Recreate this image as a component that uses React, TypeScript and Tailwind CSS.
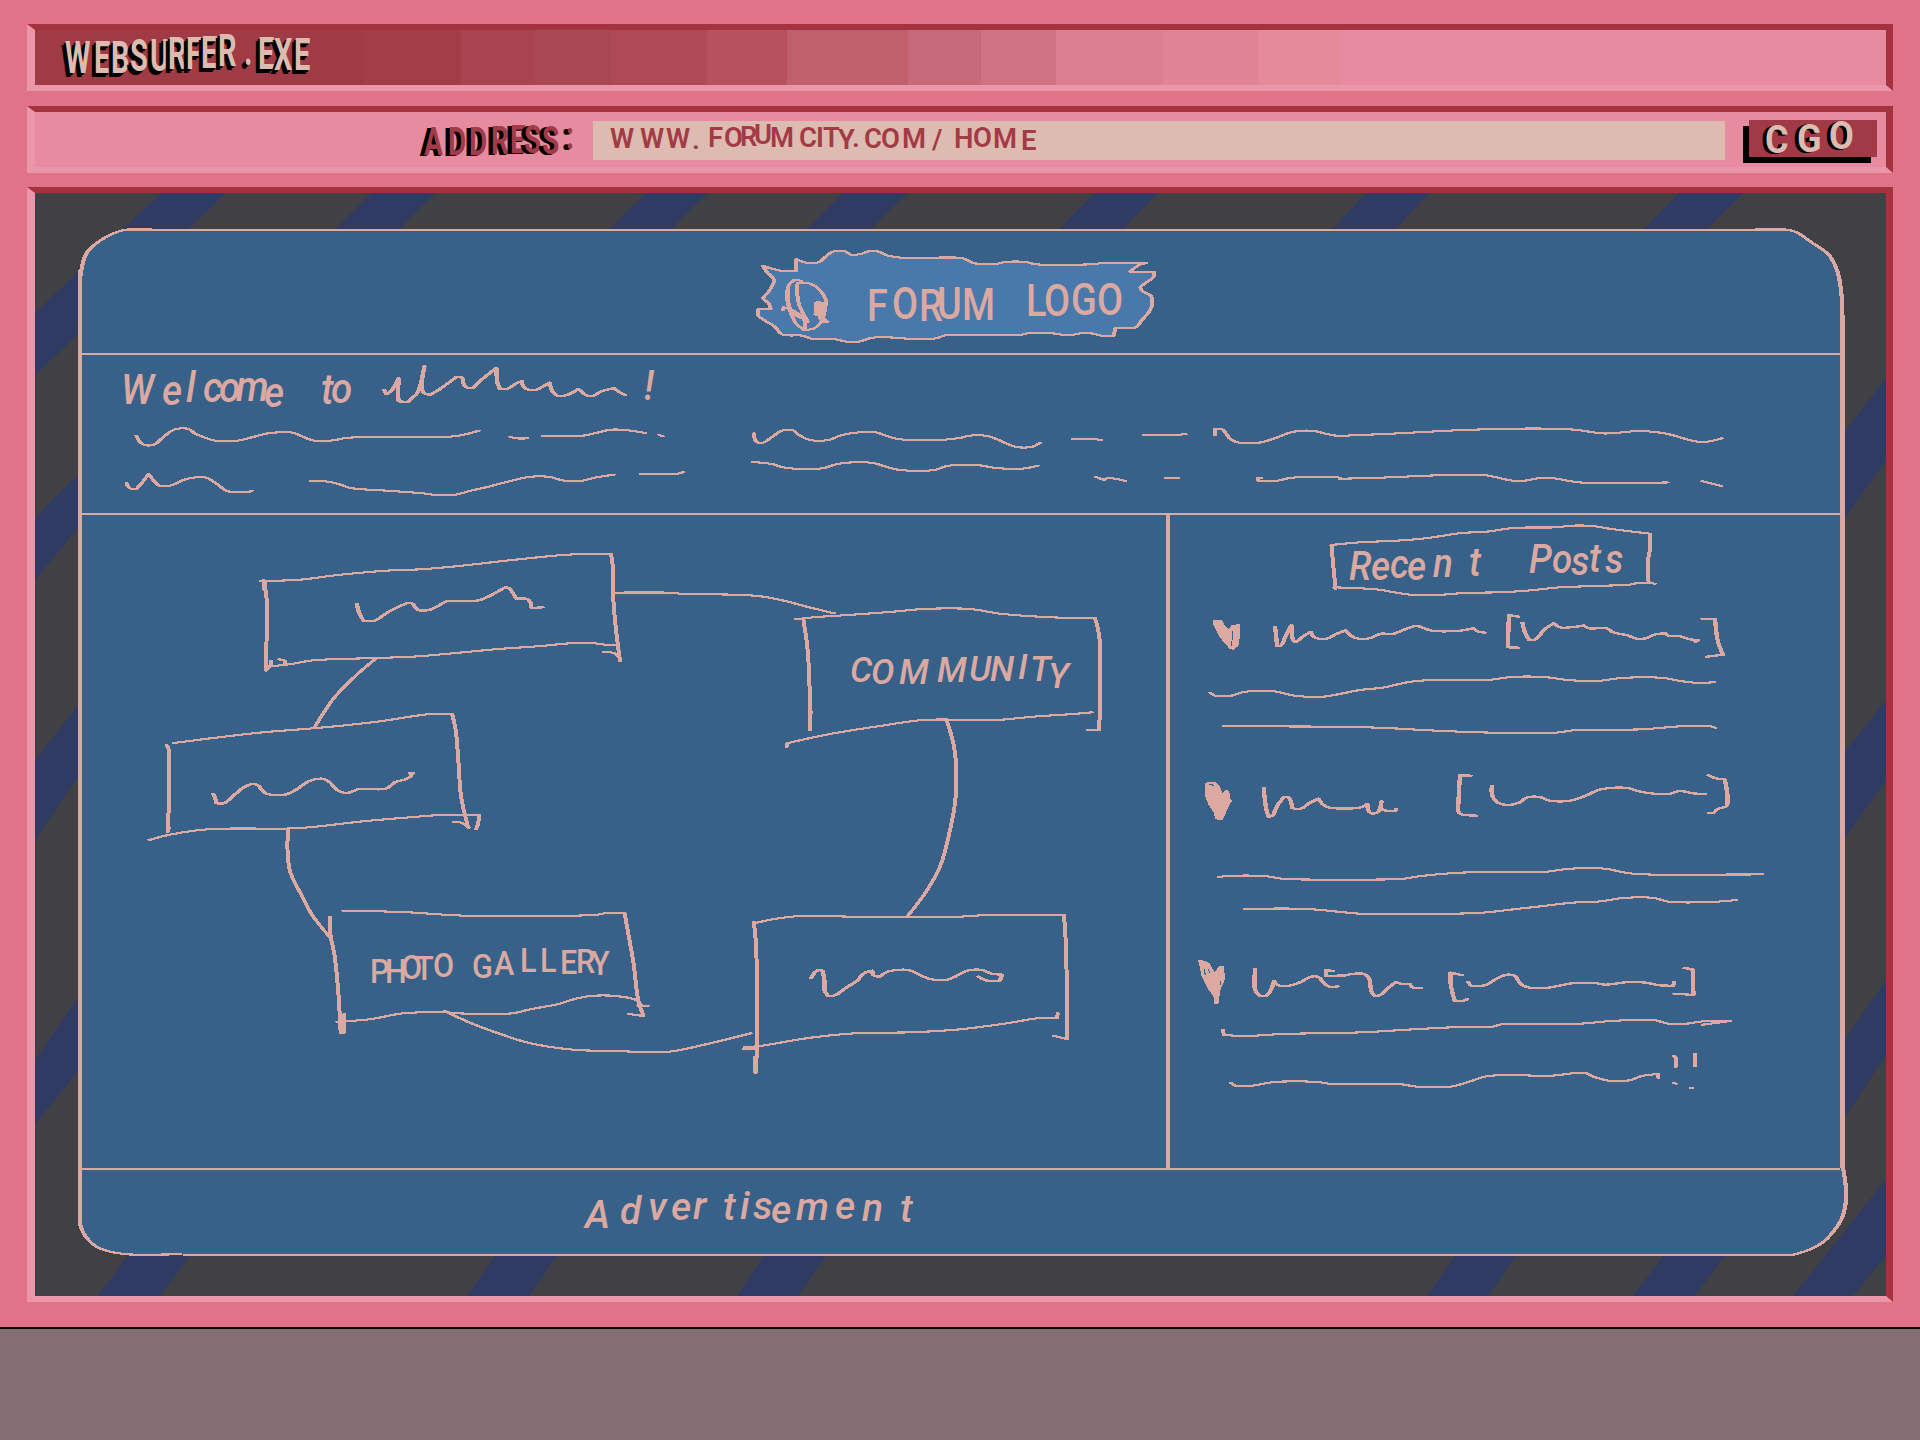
import type { ReactNode } from "react";

const INK = "#dba9a1";

/* ---------- pen helpers ---------- */

type Grid = [ox: number, oy: number, kx: number, ky: number];

const parse = (s: string, [ox, oy, kx, ky]: Grid) => {
  const n = s.trim().split(/\s+/).map(Number);
  const pts: [number, number][] = [];
  for (let i = 0; i < n.length; i += 2) pts.push([ox + n[i] / kx, oy + n[i + 1] / ky]);
  return pts;
};

/* Smooth curve through the points; sharp turns stay sharp. */
const smooth = (pts: [number, number][], sx: number) => {
  const p = pts.map(([x, y]) => [x / sx, y] as [number, number]);
  const dir = p.map((c, i) => {
    const a = p[i - 1];
    const b = p[i + 1];
    if (!a || !b) return [0, 0, 0];
    const u = [c[0] - a[0], c[1] - a[1]];
    const v = [b[0] - c[0], b[1] - c[1]];
    const lu = Math.hypot(u[0], u[1]) || 1;
    const lv = Math.hypot(v[0], v[1]) || 1;
    if ((u[0] * v[0] + u[1] * v[1]) / (lu * lv) < 0.4) return [0, 0, 0];
    const t = [u[0] / lu + v[0] / lv, u[1] / lu + v[1] / lv];
    const lt = Math.hypot(t[0], t[1]) || 1;
    return [t[0] / lt, t[1] / lt, Math.min(lu, lv) * 0.6];
  });
  let d = `M${p[0][0].toFixed(2)} ${p[0][1].toFixed(2)}`;
  for (let i = 1; i < p.length; i++) {
    const len = Math.hypot(p[i][0] - p[i - 1][0], p[i][1] - p[i - 1][1]) / 3;
    const h0 = Math.min(len, dir[i - 1][2]);
    const h1 = Math.min(len, dir[i][2]);
    const c = [
      p[i - 1][0] + dir[i - 1][0] * h0,
      p[i - 1][1] + dir[i - 1][1] * h0,
      p[i][0] - dir[i][0] * h1,
      p[i][1] - dir[i][1] * h1,
      p[i][0],
      p[i][1],
    ];
    d += `C${c.map((v) => v.toFixed(2)).join(" ")}`;
  }
  return d;
};

/* Flat nib: upright strokes come out about twice as thick as level ones. */
function Pen({ grid, lines, nib = 2.1 }: { grid: Grid; lines: string[]; nib?: number }) {
  return (
    <g transform="scale(1.9 1)" fill="none" stroke={INK} strokeWidth={nib} strokeLinejoin="round" strokeLinecap="round">
      {lines.map((l, i) => (
        <path key={i} d={smooth(parse(l, grid), 1.9)} />
      ))}
    </g>
  );
}

function Fill({ grid, shape, color = INK }: { grid: Grid; shape: string; color?: string }) {
  return <polygon fill={color} points={parse(shape, grid).map((p) => p.join(",")).join(" ")} />;
}

function Canvas({ box, className = "", children }: { box: [number, number, number, number]; className?: string; children: ReactNode }) {
  return (
    <svg
      width={box[2]}
      height={box[3]}
      viewBox={box.join(" ")}
      shapeRendering="crispEdges"
      className={`block shrink-0 overflow-visible ${className}`}
    >
      {children}
    </svg>
  );
}

type LetteringProps = {
  text: string;
  x: number[];
  y: number[];
  size: number;
  squeeze?: number;
  color?: string;
  shadow?: [number, number];
  className?: string;
};

/* Uneven hand lettering: every glyph has its own place. */
function Lettering({ text, x, y, size, squeeze = 1, color = INK, shadow, className = "" }: LetteringProps) {
  return (
    <text
      transform={`scale(${squeeze} 1)`}
      x={x.map((v) => (v / squeeze).toFixed(1)).join(" ")}
      y={y.join(" ")}
      fontSize={size}
      fill={color}
      style={shadow ? { textShadow: `${shadow[0]}px ${shadow[1]}px 0 #000, ${shadow[0] / 2}px ${shadow[1] / 2}px 0 #000` } : undefined}
      className={`font-[Roboto,sans-serif] ${className}`}
    >
      {text}
    </text>
  );
}

/* ---------- window chrome ---------- */

function Bevel({ className = "", children }: { className?: string; children: ReactNode }) {
  return (
    <div
      className={`flex shrink-0 border-t-[6px] border-r-[7px] border-b-[6px] border-l-[8px] border-t-[#a5333f] border-r-[#a5333f] border-b-[#ec96aa] border-l-[#ec96aa] ${className}`}
    >
      {children}
    </div>
  );
}

function TitleBar() {
  return (
    <Bevel className="h-[67px] bg-[linear-gradient(90deg,#a03a45_0_329px,#a33e49_329px_426px,#a74450_426px_500px,#a94852_500px_576px,#ae4a56_576px_672px,#b7515d_672px_752px,#c0606d_752px_873px,#c66a79_873px_946px,#cf7283_946px_1021px,#db7e91_1021px_1127px,#e08396_1127px_1223px,#e38a9b_1223px_1306px,#e78ba1_1306px)]">
      <h1>
        <Canvas box={[35, 30, 300, 55]}>
          <Lettering
            text="WEBSURFER.EXE"
            x={[65, 94, 111, 130, 150, 168, 186, 201, 218, 244, 258, 274, 294]}
            y={[73, 73, 73, 71, 71, 69, 69, 68, 66, 65, 69, 70, 70]}
            size={44}
            squeeze={0.66}
            color="#debbb0"
            shadow={[-5, 3]}
            className="font-bold"
          />
        </Canvas>
      </h1>
    </Bevel>
  );
}

function AddressBar() {
  return (
    <Bevel className="mt-[15px] h-[67px] bg-[#e78ba1]">
      <label className="flex">
        <Canvas box={[35, 112, 558, 55]}>
          <Lettering
            text="ADDRESS:"
            x={[424, 448, 469, 491, 510, 524, 542, 566]}
            y={[155, 155, 155, 154, 153, 153, 154, 149]}
            size={38}
            squeeze={0.74}
            color="#a33b47"
            shadow={[-5, 1]}
            className="font-bold"
          />
        </Canvas>
        <div className="mt-[9px] h-[39px] w-[1132px] bg-[#debbb0]">
          <Canvas box={[593, 121, 1132, 39]}>
            <Lettering
              text="WWW.FORUMCITY.COM/HOME"
              x={[610, 640, 666, 692, 708, 724, 740, 754, 770, 799, 816, 823, 838, 852, 864, 881, 902, 932, 954, 973, 993, 1021]}
              y={[148, 148, 148, 149, 147, 147, 146, 144, 147, 147, 147, 147, 149, 147, 148, 148, 148, 149, 148, 147, 148, 150]}
              size={28}
              squeeze={0.98}
              color="#a33b47"
              className="font-semibold"
            />
          </Canvas>
        </div>
      </label>
      <button className="mt-2 ml-6 h-[37px] w-[128px] bg-[#a03a46] shadow-[-6px_6px_0_#000]">
        <Canvas box={[1749, 120, 128, 37]}>
          <Lettering
            text="CGO"
            x={[1765, 1797, 1829]}
            y={[153, 152, 149]}
            size={38}
            squeeze={0.95}
            color="#debbb0"
            shadow={[-4, 1]}
            className="font-bold"
          />
        </Canvas>
      </button>
    </Bevel>
  );
}

/* ---------- forum page ---------- */

const STRIPES = [
  "161,193 226,193 35,375 35,313",
  "372,193 436,193 340,288 276,288",
  "646,193 708,193 612,288 550,288",
  "843,193 908,193 810,288 746,288",
  "1094,193 1158,193 1066,288 1002,288",
  "1366,193 1429,193 1342,288 1278,288",
  "1679,193 1743,193 1648,288 1584,288",
  "35,517 90,462 90,514 35,580",
  "35,760 90,690 90,760 35,840",
  "35,1060 90,980 90,1057 35,1124",
  "127,1256 190,1256 160,1296 98,1296",
  "495,1256 557,1256 529,1296 467,1296",
  "763,1256 826,1256 798,1296 737,1296",
  "1455,1256 1516,1256 1488,1296 1427,1296",
  "1663,1256 1725,1256 1695,1296 1633,1296",
  "1886,1179 1886,1256 1853,1296 1793,1296",
  "1886,378 1886,460 1830,540 1830,450",
  "1886,700 1886,780 1830,860 1830,770",
  "1886,980 1886,1055 1830,1140 1830,1060",
];

function Stripes() {
  return (
    <Canvas box={[35, 193, 1851, 1103]} className="absolute inset-0">
      {STRIPES.map((s) => (
        <polygon key={s} points={s} fill="#2f3b62" />
      ))}
    </Canvas>
  );
}

const OUTLINE =
  "M80 300L81 272L88 251L101 240L112 234L124 229.5H150L153 230H1740L1756 229.5H1785L1796 232L1811 242L1828 254L1837 270L1841 290L1842.5 320V1168L1845.5 1184L1846 1200L1842 1218L1833 1232L1822 1243L1806 1251L1792 1255H183L180 1254H124L99 1248L86 1237L80 1224Z";

function PanelEdge() {
  return (
    <Canvas box={[78, 229, 1767, 1027]} className="absolute inset-0">
      <path d={OUTLINE} fill="#386189" />
      <path d="M124 230H1785M183 1255H1795" stroke={INK} strokeWidth={2} />
      <path d="M80 270V1224M1842.5 315V1168" stroke={INK} strokeWidth={4.5} />
      <Pen
        nib={2.2}
        grid={[0, 0, 1, 1]}
        lines={[
          "80 300 81 272 88 251 101 240 112 234 124 230 150 229",
          "1756 229.5 1785 229.5 1796 232 1811 242 1828 254 1837 270 1841 290 1842.5 320",
          "1843 1168 1845.5 1184 1846 1200 1842 1218 1833 1232 1822 1243 1806 1251 1792 1255",
          "180 1254 124 1254 99 1248 86 1237 80 1224",
        ]}
      />
    </Canvas>
  );
}

function Logo() {
  const g: Grid = [640, 80, 2.45, 3];
  const edge =
    "302 558 350 573 383 573 383 538 408 548 438 547 450 535 475 514 502 514 517 524 540 522 565 513 585 515 605 526 650 534 788 534 820 550 875 551 895 546 945 546 970 553 1105 553 1135 549 1241 549 1225 554 1200 575 1260 575 1259 590 1226 622 1230 632 1252 648 1252 685 1230 720 1212 743 1165 743 1160 768 1130 767 1105 760 1080 760 1050 766 1010 760 950 760 930 765 748 766 725 775 655 776 625 773 570 773 535 785 505 785 480 778 420 776 398 767 350 764 330 740 290 707 290 688 320 686 315 670 302 655 315 635 328 600 310 575 302 558";
  return (
    <Canvas box={[756, 250, 400, 94]}>
      <Fill grid={g} shape={edge} color="#4979aa" />
      <Pen
        grid={g}
        lines={[
          edge,
          "395 602 378 600 365 615 361 660 370 700 382 730 402 750 425 746 442 730 453 690 454 655 440 630 420 612 390 608",
          "386 610 387 660 397 695 412 725",
          "350 690 352 682 372 690 400 715 405 748",
          "364 620 364 670 375 700 395 715",
          "440 715 452 727 460 725",
        ]}
      />
      <Fill grid={g} shape="427 668 434 662 456 668 456 695 452 712 464 725 446 730 440 712 425 704" />
      <Lettering
        text="FORUM LOGO"
        x={[867, 892, 919, 937, 962, 1000, 1026, 1044, 1071, 1097]}
        y={[321, 319, 321, 319, 320, 316, 316, 316, 315, 315]}
        size={44}
        squeeze={0.86}
        className="font-medium"
      />
    </Canvas>
  );
}

function Welcome() {
  const a: Grid = [60, 340, 2.45, 3];
  const b: Grid = [700, 400, 2.45, 3];
  const c: Grid = [0, 0, 0.81667, 0.81667];
  return (
    <section className="h-[160px] border-b-2 border-[#dba9a1]">
      <Canvas box={[82, 355, 1758, 158]}>
        <Lettering
          text="Welcome to !"
          x={[121, 162, 186, 203, 219, 236, 264, 290, 321, 331, 400, 644]}
          y={[404, 405, 402, 402, 402, 401, 407, 400, 404, 403, 400, 400]}
          size={43}
          squeeze={0.9}
          className="font-medium italic"
        />
        <Pen
          nib={2.3}
          grid={a}
          lines={[
            "795 150 800 163 812 152 830 115 828 165 830 184 852 186 862 175 875 160 882 140 893 78 886 140 893 160 905 165 925 152 950 130 972 110 984 112 990 135 1000 145 1012 143 1030 122 1069 84 1072 130 1078 147 1095 147 1115 132 1132 123 1142 147 1165 150 1185 138 1200 128 1207 155 1220 168 1240 166 1270 147",
            "1275 150 1288 165 1305 168 1325 155 1358 144 1368 155 1384 165",
          ]}
        />
        <Pen
          grid={a}
          lines={[
            "187 287 195 305 207 315 228 315 250 295 270 275 285 267 315 267 330 280 360 295 380 302 435 302 470 292 510 280 570 278 595 290 622 302 670 301 700 294 750 291 955 290 990 284 1026 272",
            "1102 290 1118 295 1145 295",
            "1182 288 1275 288 1310 280 1350 269 1385 270 1433 279",
            "1468 285 1478 289",
            "163 430 172 445 187 447 200 430 217 402 232 425 245 438 270 437 300 421 325 413 358 413 380 428 415 455 465 455 470 452",
            "614 423 650 424 680 431 712 444 800 452 890 460 920 465 970 464 1000 454 1050 440 1100 424 1155 410 1200 411 1235 422 1280 422 1310 413 1358 404",
            "1422 402 1510 402 1528 396",
          ]}
        />
        <Pen
          grid={b}
          lines={[
            "132 100 136 122 145 130 157 127 180 108 205 90 228 91 240 103 270 120 315 120 345 106 390 97 430 97 460 109 485 117 520 120 590 120 640 113 660 107 705 108 730 119 750 130 775 141 815 140 834 128",
            "130 186 180 193 200 201 245 207 300 205 330 194 360 188 425 189 455 200 490 210 575 210 605 198 640 195 685 196 725 204 790 206 828 197",
            "912 117 960 117 983 120",
            "1087 104 1175 104 1190 102",
            "970 231 990 240 1000 234 1043 243",
            "1142 234 1173 234",
            "1262 105 1262 87 1278 87 1290 103 1300 118 1320 128 1370 128 1410 114 1440 100 1465 93 1505 93 1535 102 1568 109",
            "1376 234 1366 234 1367 242 1415 242 1440 235 1475 231 1550 231 1568 233",
          ]}
        />
        <Pen
          grid={c}
          lines={[
            "1094 356 1140 354 1200 351 1260 350 1287 351 1310 354 1340 352 1360 354 1390 361 1406 358",
            "1094 391 1130 390 1180 388 1212 388 1240 393 1262 390 1290 394 1362 394",
            "1390 393 1406 397",
          ]}
        />
      </Canvas>
    </section>
  );
}

function SiteMap() {
  const top: Grid = [120, 530, 2.8, 3];
  const photo: Grid = [280, 820, 2.8, 3];
  const right: Grid = [680, 580, 3, 3];
  return (
    <nav className="border-r-4 border-[#dba9a1]">
      <Canvas box={[82, 515, 1084, 653]}>
        <Pen
          grid={top}
          lines={[
            "394 153 505 149 610 135 760 121 840 118 940 109 1090 91 1240 75 1300 72 1375 72",
            "1375 72 1381 120 1382 220 1390 310 1400 393",
            "1355 366 1385 370 1395 380",
            "402 150 410 200 410 350 408 422 422 405 422 392",
            "405 155 404 180",
            "430 408 480 402 540 391 715 384 820 380 960 367 1060 357 1180 348 1260 340 1330 340 1370 346 1390 346",
            "446 388 463 392 462 402",
            "150 639 300 619 400 607 540 595 630 586 720 575 870 552 930 552",
            "930 552 940 600 948 700 955 800 975 893",
            "934 876 955 878 978 893",
            "131 645 137 660 137 815 133 905 138 892",
            "82 930 135 915 245 898 460 896 530 892 680 874 800 863 900 855 1005 855 1003 880 997 897",
            "716 386 660 437 600 503 545 592",
            "1390 190 1400 188 1535 188 1568 191",
          ]}
        />
        <Pen
          nib={2.3}
          grid={top}
          lines={[
            "663 222 670 250 682 272 712 272 745 250 780 230 808 218 820 222 835 240 865 240 890 228 915 214 1005 211 1040 195 1080 171 1090 175 1110 206 1140 207 1150 220 1152 234 1183 232",
            "260 792 265 800 270 820 290 820 320 795 345 773 370 762 385 765 408 790 430 795 462 794 495 778 530 753 565 746 585 755 612 783 635 789 670 777 745 776 770 757 808 744 820 728 811 728",
          ]}
        />
        <Pen
          grid={photo}
          lines={[
            "22 27 22 110 30 160 60 225 90 285 140 352",
            "177 272 240 273 360 277 460 284 540 288 780 288 890 284 915 279 965 279",
            "965 279 975 340 990 430 1003 540 1018 588 977 582",
            "140 290 142 350 152 400 162 500 170 640 178 640 180 582",
            "160 605 250 598 345 580 460 577 520 581 650 580 700 568 780 552 825 537 870 528 940 528 1000 541 1010 555",
            "1002 557 1031 557",
            "462 573 490 588 550 616 620 643 690 667 810 688 960 694 1090 695 1180 676 1318 640",
          ]}
        />
        <Pen
          grid={right}
          lines={[
            "0 42 190 45 250 50 320 64 380 80 463 100",
            "347 118 400 112 490 106 640 95 730 87 870 87 960 101 1140 113 1245 114",
            "1245 114 1258 170 1260 380 1257 450 1222 450",
            "370 118 382 200 388 300 390 450",
            "392 395 391 410",
            "320 500 320 490 450 462 600 438 730 420 950 420 1060 410 1180 402 1236 397",
            "800 420 820 490 828 550 826 660 810 750 780 860 735 940 683 1008",
            "221 1030 290 1016 360 1008 520 1010 840 1010 920 1005 1152 1004",
            "1152 1004 1158 1100 1160 1200 1161 1377 1122 1368",
            "221 1025 228 1090 230 1170 231 1400 227 1478",
            "225 1430 225 1478",
            "222 1408 192 1408 194 1402 240 1398 400 1372 540 1359 690 1357 840 1348 980 1330 1080 1314 1132 1314 1133 1299",
          ]}
        />
        <Pen
          nib={2.3}
          grid={right}
          lines={[
            "394 1195 402 1180 415 1170 428 1172 433 1200 435 1235 445 1248 465 1246 500 1222 530 1203 555 1178 577 1172 582 1187 600 1190 620 1176 650 1170 685 1170 720 1185 750 1197 800 1200 835 1185 865 1171 905 1170 935 1181 966 1184 960 1202 925 1203 895 1190",
          ]}
        />
        <Lettering
          text="COMMUNITY"
          x={[850, 871, 899, 937, 969, 990, 1018, 1030, 1048]}
          y={[682, 684, 684, 682, 681, 681, 679, 681, 688]}
          size={35}
          squeeze={1}
          className="font-medium italic"
        />
        <Lettering
          text="PHOTO GALLERY"
          x={[370, 385, 401, 415, 433, 460, 472, 494, 520, 540, 560, 576, 591]}
          y={[983, 983, 979, 980, 977, 977, 978, 975, 972, 972, 974, 973, 975]}
          size={34}
          squeeze={0.9}
          className="font-medium"
        />
      </Canvas>
    </nav>
  );
}

function RecentPosts() {
  const a: Grid = [1160, 500, 2.45, 3];
  const b: Grid = [1160, 820, 2.45, 3];
  return (
    <aside className="flex flex-col">
      <h2>
        <Canvas box={[1170, 515, 670, 90]}>
          <Pen
            grid={a}
            lines={[
              "430 267 420 135 490 127 580 122 650 115 740 99 800 95 865 84 970 82 1010 77 1060 78 1100 86 1200 101 1200 150 1196 180 1197 246",
              "427 262 490 265 530 268 620 285 680 285 745 279 825 277 890 273 980 262 1040 259 1150 254 1175 248 1213 251",
            ]}
          />
          <Lettering
            text="Recent Posts"
            x={[1349, 1371, 1390, 1407, 1433, 1469, 1495, 1529, 1552, 1571, 1589, 1605]}
            y={[580, 580, 578, 580, 577, 576, 575, 573, 573, 575, 572, 573]}
            size={40}
            squeeze={0.92}
            className="font-medium italic"
          />
        </Canvas>
      </h2>
      <article>
        <Canvas box={[1170, 605, 670, 150]}>
          <Fill grid={a} shape="130 361 152 361 158 376 168 388 176 374 197 373 196 410 192 438 180 449 172 448 158 430 143 405 131 375" />
          <path d="M1232 631V640M1231 641V646" stroke="#386189" />
          <Pen
            nib={2.3}
            grid={a}
            lines={[
              "282 380 287 438 296 437 312 398 322 375 326 420 333 427 350 410 370 395 380 413 408 416 430 403 455 391 475 412 500 417 520 412 542 401 570 402 600 388 628 378 665 392 735 392 768 385 780 395 795 398",
              "878 350 855 345 852 442 878 443",
              "888 368 895 400 905 420 920 418 945 385 965 370 980 382 1020 380 1038 376 1050 385 1095 385 1108 396 1145 406 1168 416 1190 415 1210 404 1238 400 1245 407 1275 409 1295 417 1318 421 1312 425",
              "1329 356 1360 357 1368 430 1380 464 1340 470",
            ]}
          />
          <Pen
            grid={a}
            lines={[
              "123 578 135 587 175 587 205 576 240 573 280 574 330 587 400 590 440 582 490 570 545 563 610 546 665 540 810 539 860 531 940 531 1000 540 1070 543 1130 534 1235 534 1275 543 1310 548 1358 547",
              "157 678 255 679 480 681 570 685 660 691 780 697 870 699 970 698 1020 690 1180 688 1290 678 1350 679 1361 684",
            ]}
          />
        </Canvas>
      </article>
      <article>
        <Canvas box={[1170, 755, 670, 190]}>
          <Fill grid={a} shape="110 850 118 846 136 847 147 858 153 880 160 870 170 872 171 892 176 903 166 925 160 942 154 960 136 958 131 936 118 912 111 890" />
          <path d="M1209 784h3v1h2" stroke="#386189" fill="none" />
          <Pen
            nib={2.3}
            grid={a}
            lines={[
              "254 864 260 925 266 950 275 948 290 912 305 890 315 892 325 925 345 926 365 910 388 896 398 912 415 923 490 923 508 912 512 935 522 942 535 935 543 904 545 928 560 933 578 932 578 926",
              "761 827 735 826 732 938 742 944 774 947",
              "813 859 815 890 828 908 850 915 880 908 900 892 930 891 955 902 1005 902 1045 886 1080 868 1145 864 1180 876 1245 882 1275 873 1305 880 1336 882",
              "1344 826 1362 835 1384 838 1388 918 1365 928 1355 939 1344 939",
            ]}
          />
          <Pen
            grid={b}
            lines={[
              "143 171 165 168 255 168 305 177 590 177 640 168 720 159 795 156 940 156 990 148 1040 144 1090 146 1150 160 1215 164 1390 164 1476 163",
              "1390 162 1476 162",
              "208 267 360 267 460 278 500 282 670 282 790 278 880 266 940 258 1010 248 1080 244 1135 234 1210 234 1245 245 1350 246 1413 240",
            ]}
          />
        </Canvas>
      </article>
      <article>
        <Canvas box={[1170, 945, 670, 223]}>
          <Fill grid={b} shape="93 420 103 420 122 430 134 458 145 438 157 438 159 478 148 510 143 551 132 551 131 530 115 502 102 470 96 432" />
          <path d="M1204 969v3l2 3M1208 969l2 4M1220 981v4" stroke="#386189" fill="none" />
          <Pen
            nib={2.3}
            grid={b}
            lines={[
              "233 447 233 510 243 527 262 527 272 510 279 483 292 497 318 497 345 486 370 470 388 471 400 488 415 500 435 499",
              "425 453 407 450 407 467 455 466 470 462 500 462 512 475 518 515 527 528 540 525 560 503 578 486 590 491 612 491 620 503 640 504",
              "739 465 712 458 712 490 722 542 742 543 753 537",
              "754 486 762 497 795 496 825 476 850 464 868 467 885 493 905 503 950 503 1010 490 1065 489 1090 494 1150 486 1190 488 1225 496 1257 497 1260 486",
              "1285 444 1305 448 1307 525 1285 523 1260 521",
            ]}
          />
          <Pen
            grid={b}
            lines={[
              "154 630 157 645 208 648 300 642 495 637 620 628 735 621 815 620 840 612 1030 611 1105 603 1210 600 1245 611 1290 611 1330 604 1398 603 1330 614",
              "174 789 185 797 225 797 280 786 385 786 420 792 585 792 630 800 712 800 760 784 800 769 850 765 960 767 1020 759 1045 760 1060 769 1105 783 1150 781 1180 768 1221 762 1221 773",
              "1259 708 1263 712 1263 740",
              "1311 702 1311 738",
              "1258 788 1264 791",
              "1300 805 1304 805",
            ]}
          />
        </Canvas>
      </article>
    </aside>
  );
}

function ForumPage() {
  return (
    <main className="relative flex h-[1027px] w-[1767px] flex-col">
      <PanelEdge />
      <div className="relative mt-0.5 ml-1 flex w-[1758px] flex-col">
        <header className="flex h-[124px] border-b-2 border-[#dba9a1] pt-[19px] pl-[674px]">
          <Logo />
        </header>
        <Welcome />
        <div className="flex h-[655px] border-b-2 border-[#dba9a1]">
          <SiteMap />
          <RecentPosts />
        </div>
        <footer className="h-[84px]">
          <Canvas box={[82, 1170, 1758, 84]}>
            <Lettering
              text="Advertisement"
              x={[585, 620, 648, 671, 693, 723, 740, 753, 771, 796, 835, 862, 900]}
              y={[1228, 1224, 1220, 1220, 1219, 1220, 1219, 1219, 1223, 1220, 1219, 1221, 1222]}
              size={39}
              squeeze={1}
              className="font-medium italic"
            />
          </Canvas>
        </footer>
      </div>
    </main>
  );
}

export default function App() {
  return (
    <div className="flex h-[1440px] w-[1920px] flex-col overflow-hidden bg-[#836f73]">
      <div className="flex h-[1329px] flex-col border-b-2 border-black bg-[#e07387] px-[27px] pt-6">
        <TitleBar />
        <AddressBar />
        <Bevel className="relative mt-[14px] h-[1115px] bg-[#404045] pt-9 pl-[43px]">
          <Stripes />
          <ForumPage />
        </Bevel>
      </div>
    </div>
  );
}
